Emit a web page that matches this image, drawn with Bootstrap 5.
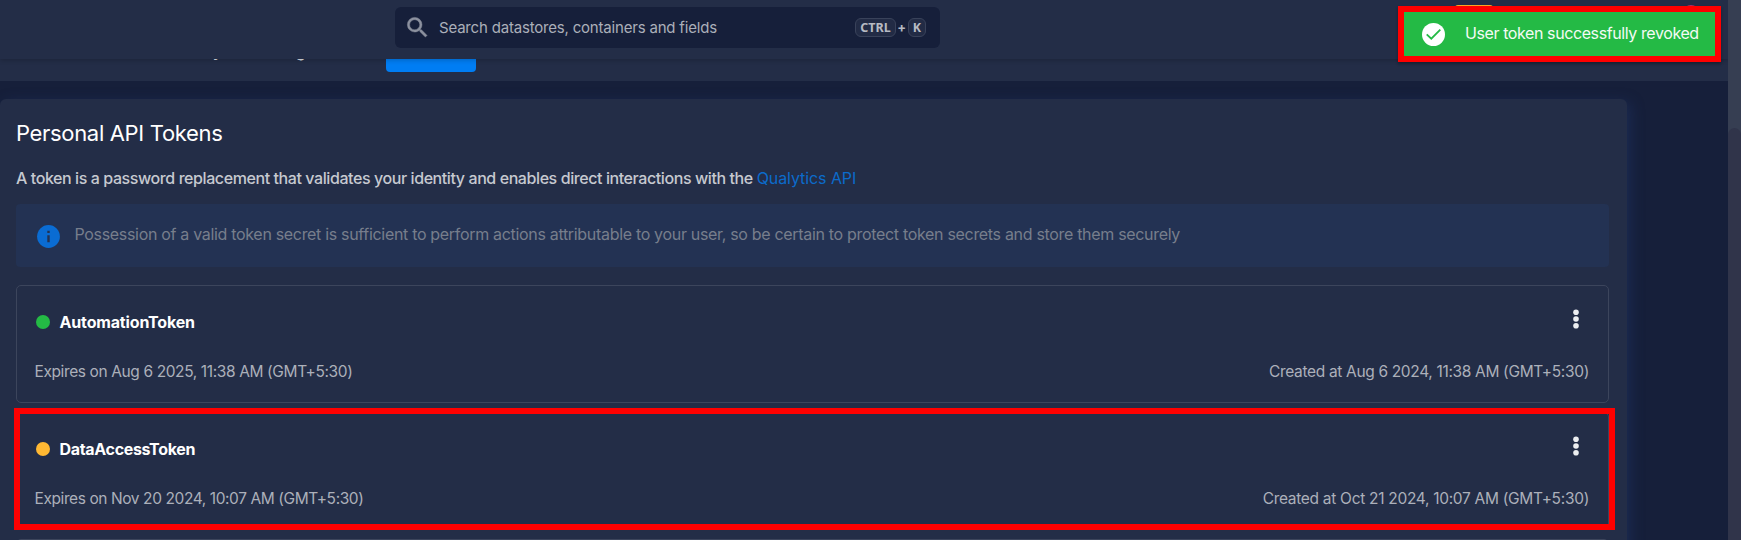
<!DOCTYPE html>
<html lang="en" data-bs-theme="dark">
<head>
<meta charset="utf-8">
<meta name="viewport" content="width=device-width, initial-scale=1">
<title>Personal API Tokens</title>
<link href="https://cdn.jsdelivr.net/npm/bootstrap@5.3.0/dist/css/bootstrap.min.css" rel="stylesheet">
<style>
  body { background: #161f3a; font-family: Inter, sans-serif; font-size: 16px; line-height: 24px; color: #c6c9d0; height: 540px; overflow: hidden; }
  .page-main { width: 1728px; height: 540px; overflow: hidden; }
  .scroll-track { width: 13px; background: #363e52; padding-top: 128px; }
  .scroll-thumb { height: 420px; background: #30344a; border-radius: 7px; }
  .top-bar { height: 59px; background: #232d47; box-shadow: 0 1px 5px rgba(0,0,0,.22); z-index: 2; padding: 7px 0 0 395px; }
  .search-box { width: 545px; height: 41px; border-radius: 6px; background: #161f3a; padding: 0 14px 0 9px; color: #abafb9; }
  .search-text { font-size: 15px; letter-spacing: -.19px; margin-left: 8px; }
  kbd.key { font: 700 12.5px/17px "Noto Sans", sans-serif; height: 19px; border: 1px solid #39425a; border-radius: 6px; background: #222b45; color: #b7bac3; padding: 0 4px; }
  .plus-sign { font-size: 13px; font-weight: 700; width: 12px; line-height: 18px; text-align: center; color: #b7bac3; margin-top: -2px; }
  .sub-bar { height: 22px; background: #232d47; z-index: 1; }
  .sub-label { font-weight: 600; font-size: 15px; line-height: 24px; height: 24px; margin-top: -19px; color: #dfe1e6; }
  .sub-label.first { margin-left: 213px; width: 83px; }
  .sub-label.second { width: 90px; }
  .blue-btn { width: 90px; height: 38px; margin-top: -25px; background: #007df3; border-radius: 4px; }
  .token-panel { margin-top: 18px; width: 1627px; height: 470px; background: #232d47; border-radius: 6px; padding: 21px 18px 0 16px; box-shadow: 4px 3px 14px rgba(34,55,108,.45); }
  .panel-title { font-size: 22px; line-height: 26px; letter-spacing: -.328px; font-weight: 400; color: #fff; margin: 0; }
  .panel-desc { font-weight: 500; letter-spacing: -.415px; margin: 20px 0 14px; line-height: 24px; white-space: nowrap; }
  .panel-desc a { color: #0b6bcb; font-weight: 400; letter-spacing: -.08px; text-decoration: none; }
  .notice { height: 63px; background: #233253; border-radius: 4px; padding: 0 20px; margin-bottom: 18px; color: #777e8c; }
  .notice svg { margin: 1px 0 0 .5px; }
  .notice-text { margin: -3px 0 0 15px; letter-spacing: -.317px; }
  .token-item { height: 118px; border: 1px solid #3c455c; border-radius: 5px; margin-bottom: 9px; padding: 24px 19px 0 17.5px; }
  .token-name { font-weight: 700; color: #fff; margin-left: 10px; }
  .status-dot { width: 14px; height: 14px; border-radius: 50%; margin-left: 1px; }
  .token-dates { margin-top: 26px; color: #acb0ba; font-size: 15.5px; white-space: nowrap; }
  .kebab { margin: -6px 10px 0 0; color: #eceef1; }
  .red-outline { left: -3px; top: -5px; width: 1601px; height: 122px; border: 6px solid #f00; }
  .toast-frame { left: 1398px; top: 6px; width: 323px; height: 56px; border: 6px solid #f00; background: #24ba45; color: #f3fbf4; padding-left: 18px; z-index: 5; box-shadow: 0 2px 3px rgba(0,0,0,.3); }
  .toast-text { margin: -2px 0 0 20px; letter-spacing: -.405px; }
  .peek-orange { left: 1455px; top: 5px; width: 38px; height: 16px; border-radius: 3px; background: #ffa726; z-index: 3; }
  .peek-pink { left: 1683px; top: 5px; width: 16px; height: 16px; border-radius: 50%; background: #b82d66; z-index: 3; }
</style>
</head>
<body>
<div class="d-flex">
  <main class="page-main position-relative d-flex flex-column">
    <header class="top-bar position-relative flex-shrink-0">
      <div class="search-box d-flex align-items-center">
        <svg width="27" height="27" viewBox="0 0 24 24" fill="#8c919f" stroke="#8c919f" stroke-width=".4"><path d="M15.5 14h-.79l-.28-.27A6.471 6.471 0 0 0 16 9.500 6.500 6.500 0 1 0 9.500 16c1.610 0 3.090-.59 4.230-1.570l.27.28v.79l5 4.990L20.490 19l-4.990-5zm-6 0C7.010 14 5 11.990 5 9.500S7.010 5 9.500 5 14 7.010 14 9.500 11.990 14 9.500 14z"/></svg>
        <span class="search-text flex-grow-1">Search datastores, containers and fields</span>
        <kbd class="key">CTRL</kbd><span class="plus-sign">+</span><kbd class="key">K</kbd>
      </div>
    </header>
    <div class="sub-bar d-flex flex-shrink-0">
      <span class="sub-label first">y</span><span class="sub-label second">g</span>
      <span class="blue-btn"></span>
    </div>
    <section class="token-panel flex-shrink-0">
      <h1 class="panel-title">Personal API Tokens</h1>
      <p class="panel-desc">A token is a password replacement that validates your identity and enables direct interactions with the <a href="#">Qualytics API</a></p>
      <div class="notice d-flex align-items-center">
        <svg width="23" height="23" viewBox="0 0 23 23"><circle cx="11.500" cy="11.500" r="11.400" fill="#0a6cd3"/><path fill="#233253" d="M10.300 5.700h2.400v2.400h-2.400zM10.300 10.300h2.400v7h-2.400z"/></svg>
        <span class="notice-text">Possession of a valid token secret is sufficient to perform actions attributable to your user, so be certain to protect token secrets and store them securely</span>
      </div>
      <article class="token-item">
        <div class="d-flex align-items-center">
          <span class="status-dot" style="background:#24ba45"></span>
          <span class="token-name" style="letter-spacing:-.16px">AutomationToken</span>
          <svg class="kebab ms-auto" width="6" height="20" viewBox="0 0 6 20" fill="currentColor"><circle cx="3" cy="3.300" r="2.800"/><circle cx="3" cy="10" r="2.800"/><circle cx="3" cy="16.700" r="2.800"/></svg>
        </div>
        <div class="token-dates d-flex justify-content-between">
          <span style="letter-spacing:-.384px">Expires on Aug 6 2025, 11:38 AM (GMT+5:30)</span>
          <span style="letter-spacing:-.336px">Created at Aug 6 2024, 11:38 AM (GMT+5:30)</span>
        </div>
      </article>
      <article class="token-item position-relative">
        <div class="red-outline position-absolute"></div>
        <div class="d-flex align-items-center">
          <span class="status-dot" style="background:#ffb833"></span>
          <span class="token-name" style="letter-spacing:-.32px">DataAccessToken</span>
          <svg class="kebab ms-auto" width="6" height="20" viewBox="0 0 6 20" fill="currentColor"><circle cx="3" cy="3.300" r="2.800"/><circle cx="3" cy="10" r="2.800"/><circle cx="3" cy="16.700" r="2.800"/></svg>
        </div>
        <div class="token-dates d-flex justify-content-between">
          <span style="letter-spacing:-.408px">Expires on Nov 20 2024, 10:07 AM (GMT+5:30)</span>
          <span style="letter-spacing:-.298px">Created at Oct 21 2024, 10:07 AM (GMT+5:30)</span>
        </div>
      </article>
      <article class="token-item"></article>
    </section>
    <span class="peek-orange position-absolute"></span>
    <span class="peek-pink position-absolute"></span>
    <div class="toast-frame position-absolute d-flex align-items-center" role="alert">
      <svg width="23" height="23" viewBox="0 0 23 23"><circle cx="11.500" cy="11.500" r="11.500" fill="#fff"/><path d="M4.700 11.300l4.600 4.400 9-9" fill="none" stroke="#24ba45" stroke-width="1.800"/></svg>
      <span class="toast-text text-nowrap">User token successfully revoked</span>
    </div>
  </main>
  <div class="scroll-track"><div class="scroll-thumb"></div></div>
</div>
<script src="https://cdn.jsdelivr.net/npm/bootstrap@5.3.0/dist/js/bootstrap.bundle.min.js"></script>
</body>
</html>
